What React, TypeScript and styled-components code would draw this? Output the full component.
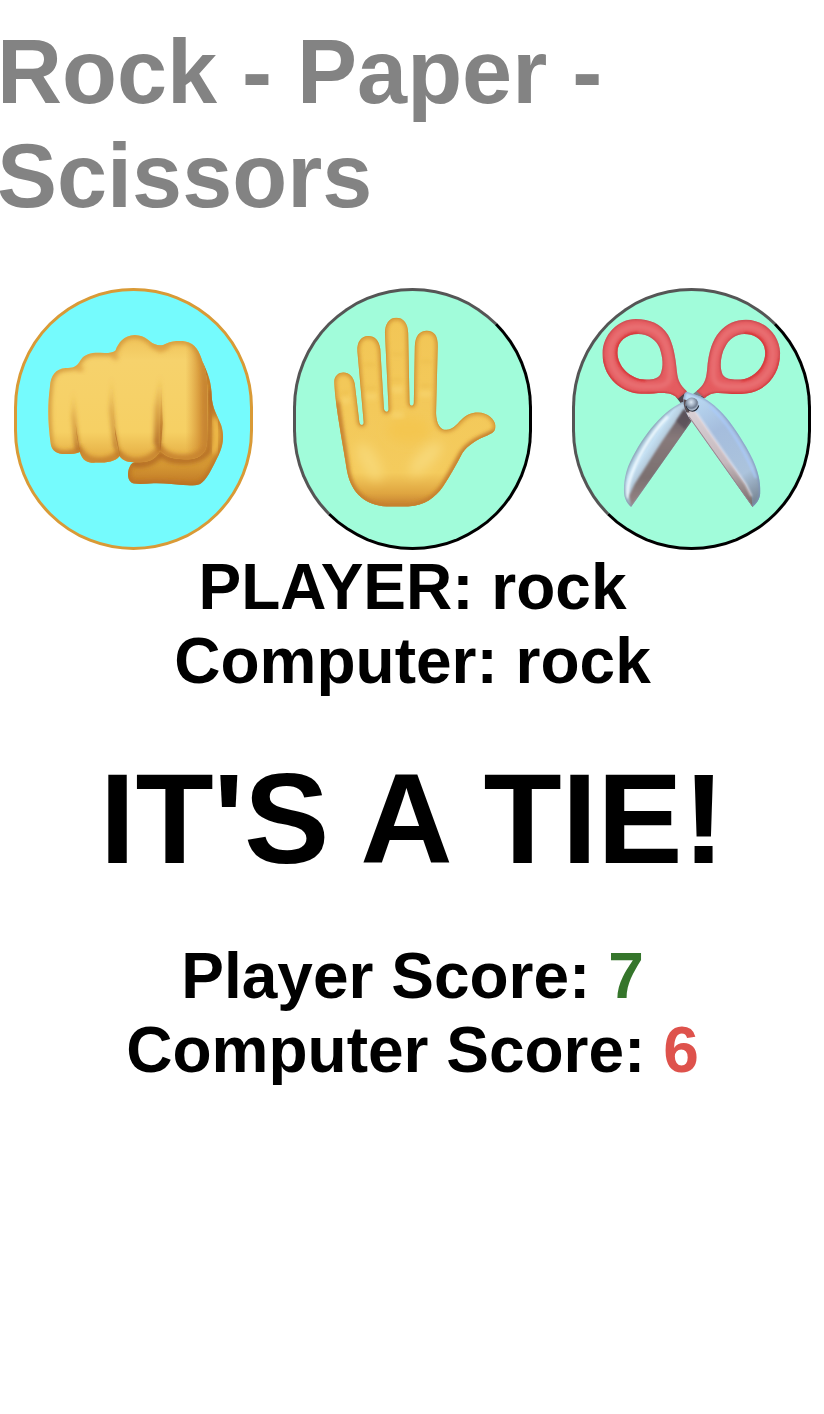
import React from "react";
import styled, { createGlobalStyle } from "styled-components";

const GlobalStyle = createGlobalStyle`
  *, *::before, *::after { box-sizing: border-box; }
  body {
    margin: 0;
    background: #ffffff;
    color: #000000;
    font-family: "Liberation Sans", Arial, sans-serif;
  }
`;

const Page = styled.main`
  display: flex;
  flex-direction: column;
  padding: 20px 0 0 1px;
`;

const Title = styled.h1`
  margin: 0 0 60px -4px;
  font-size: 90px;
  line-height: 104px;
  font-weight: 700;
  color: #838383;
`;

const Choices = styled.div`
  display: flex;
  gap: 40px;
  padding: 0 13px;
`;

const ChoiceButton = styled.button<{ $selected?: boolean }>`
  flex: 1;
  height: 262px;
  padding: 0;
  overflow: hidden;
  cursor: pointer;
  border: 3px solid;
  border-color: ${(p) => (p.$selected ? "#d99a36" : "#555555 #000000 #000000 #555555")};
  border-radius: 120px;
  background: ${(p) => (p.$selected ? "#75fbfd" : "#a1fcda")};
`;

const Art = styled.svg`
  display: block;
  width: 100%;
  height: 100%;
`;

const Results = styled.section`
  display: flex;
  flex-direction: column;
  gap: 47px;
  text-align: center;
  font-weight: 700;
`;

const Lines = styled.div`
  font-size: 64px;
  line-height: 74px;
`;

const Line = styled.p`
  margin: 0;
`;

const Verdict = styled.h2`
  margin: 0;
  font-size: 128px;
  line-height: 147px;
`;

const Score = styled.span<{ $tone: "win" | "lose" }>`
  color: ${(p) => (p.$tone === "win" ? "#35752b" : "#de524c")};
`;

const FIST =
  "M148 320C150 288 165 267 195 265C215 265 228 262 237 246C247 228 262 220 285 219C310 219 335 222 345 212C353 190 370 167 403 166C437 167 447 188 462 193C475 198 485 198 498 191C515 183 540 183 555 185C585 190 597 215 606 245C618 275 621 300 621 350L620 485C618 518 600 534 575 537C540 540 498 538 479 512C470 530 455 545 430 546C405 547 372 551 357 528C345 545 320 548 290 548C262 550 247 545 238 516C225 522 205 523 185 522C163 520 152 508 150 490C142 430 140 380 148 320Z";
const THUMB =
  "M606 245C625 285 633 310 634 350C636 385 650 405 662 435C672 465 670 495 655 525C640 555 625 590 605 608C595 618 580 617 560 616C525 614 490 609 460 610C440 611 420 614 400 611C378 605 380 575 388 560C392 550 400 546 410 545L480 500L590 400Z";

const FistArt = () => (
  <Art viewBox="49 34 700 767" preserveAspectRatio="none" aria-hidden="true">
    <defs>
      <clipPath id="fistClip"><path d={FIST} /></clipPath>
      <clipPath id="thumbClip"><path d={THUMB} /></clipPath>
      <linearGradient id="fistFill" x1="0" y1="0" x2="0" y2="1">
        <stop offset="0" stopColor="#efc258" />
        <stop offset=".2" stopColor="#f6d26c" />
        <stop offset=".76" stopColor="#f6d064" />
        <stop offset="1" stopColor="#e2a83e" />
      </linearGradient>
      <linearGradient id="thumbFill" x1="0" y1="0" x2="0" y2="1">
        <stop offset="0" stopColor="#cd8b2e" />
        <stop offset=".55" stopColor="#e9b344" />
        <stop offset=".85" stopColor="#d39532" />
        <stop offset="1" stopColor="#c07826" />
      </linearGradient>
      <linearGradient id="groove" x1="0" y1="0" x2="0" y2="1">
        <stop offset="0" stopColor="#cf8c31" stopOpacity="0" />
        <stop offset=".45" stopColor="#c37d2b" stopOpacity=".5" />
        <stop offset="1" stopColor="#a45a1c" stopOpacity=".9" />
      </linearGradient>
      <linearGradient id="fistSide" x1="555" x2="621" y1="0" y2="0" gradientUnits="userSpaceOnUse">
        <stop offset="0" stopColor="#d9993a" stopOpacity="0" />
        <stop offset=".6" stopColor="#d18d32" stopOpacity=".75" />
        <stop offset="1" stopColor="#ba7028" />
      </linearGradient>
      <filter id="fistSoft" x="-20%" y="-20%" width="140%" height="140%"><feGaussianBlur stdDeviation="8" /></filter>
      <filter id="grooveSoft" x="-100%" y="-10%" width="300%" height="120%"><feGaussianBlur stdDeviation="6" /></filter>
      <filter id="grooveLine" x="-100%" y="-10%" width="300%" height="120%"><feGaussianBlur stdDeviation="2" /></filter>
    </defs>
    <path d={THUMB} fill="url(#thumbFill)" />
    <g clipPath="url(#thumbClip)">
      <path d={THUMB} fill="none" stroke="#b86f24" strokeWidth="14" filter="url(#fistSoft)" />
      <path d="M398 552C430 560 465 545 480 522C510 550 590 552 624 515L632 330" fill="none" stroke="#b06821" strokeWidth="16" filter="url(#fistSoft)" />
      <path d="M641 415C655 450 652 490 638 520" fill="none" stroke="#f1bd4c" strokeWidth="14" filter="url(#fistSoft)" />
    </g>
    <path d={FIST} fill="url(#fistFill)" />
    <g clipPath="url(#fistClip)">
      <path d="M555 180H625V540H555Z" fill="url(#fistSide)" />
      <path d={FIST} fill="none" stroke="#cd8f36" strokeWidth="14" filter="url(#fistSoft)" />
      <path d="M148 510C180 532 215 524 236 508C260 552 320 553 355 520C390 558 445 550 479 505C510 548 590 542 622 500" fill="none" stroke="#c6812e" strokeWidth="16" filter="url(#fistSoft)" />
      <path d="M333 220L350 238M450 192L480 210L505 198M225 262L247 270" fill="none" stroke="#db9e40" strokeWidth="13" filter="url(#fistSoft)" />
      <path d="M218 325L213 410L223 500L238 519L229 440Z" fill="url(#groove)" filter="url(#grooveSoft)" />
      <path d="M333 285L326 390L340 500L357 530L345 450Z" fill="url(#groove)" filter="url(#grooveSoft)" />
      <path d="M480 280L462 380L460 490L479 515L486 440Z" fill="url(#groove)" filter="url(#grooveSoft)" />
      <path d="M218 350L225 430L238 519L228 465Z" fill="url(#groove)" filter="url(#grooveLine)" />
      <path d="M333 310L341 430L359 532L344 465Z" fill="url(#groove)" filter="url(#grooveLine)" />
      <path d="M482 310L487 430L480 515L479 440Z" fill="url(#groove)" filter="url(#grooveLine)" />
    </g>
  </Art>
);

const PALM =
  "M162 305C163 288 175 278 190 278C207 278 220 290 224 312L238 428C240 438 251 438 251 428L232 215C230 185 245 169 264 169C285 169 297 182 301 208L312 387C314 399 325 399 326 388L315 160C315 132 328 114 349 114C372 114 384 132 385 160L389 370C391 380 401 380 402 370L405 200C406 168 420 153 441 153C463 153 475 168 474 200L469 400C470 430 480 450 500 450C520 449 530 435 545 420C560 405 575 398 595 398C625 398 646 418 648 438C648 455 640 460 625 466C590 480 565 495 548 520C530 555 510 590 490 620C465 655 435 676 385 680L320 680C260 675 215 645 201 575C190 500 165 380 162 305Z";

const PalmArt = () => (
  <Art viewBox="47 34 702 767" preserveAspectRatio="none" aria-hidden="true">
    <defs>
      <clipPath id="palmClip"><path d={PALM} /></clipPath>
      <linearGradient id="palmFill" x1="0" y1="0" x2="0" y2="1">
        <stop offset="0" stopColor="#f2c656" />
        <stop offset=".82" stopColor="#f4cb5d" />
        <stop offset=".93" stopColor="#dfa540" />
        <stop offset="1" stopColor="#c47e2f" />
      </linearGradient>
      <filter id="palmSoft" x="-20%" y="-20%" width="140%" height="140%"><feGaussianBlur stdDeviation="6" /></filter>
      <filter id="palmGlow" x="-50%" y="-50%" width="200%" height="200%"><feGaussianBlur stdDeviation="16" /></filter>
    </defs>
    <path d={PALM} fill="url(#palmFill)" />
    <g clipPath="url(#palmClip)">
      <ellipse cx="385" cy="450" rx="65" ry="38" fill="#f4c64f" filter="url(#palmGlow)" />
      <ellipse cx="268" cy="545" rx="27" ry="62" transform="rotate(-30 268 545)" fill="#f7d775" filter="url(#palmGlow)" />
      <ellipse cx="438" cy="535" rx="25" ry="65" transform="rotate(45 438 535)" fill="#f7d878" filter="url(#palmGlow)" />
      <g fill="none" stroke="#f7d46d" strokeOpacity=".7" strokeWidth="20" filter="url(#palmSoft)">
        <path d="M184 365L209 359M253 350H291M332 330H370M418 342H456M335 405H372" />
      </g>
      <g fill="none" stroke="#eaba4a" strokeOpacity=".7" strokeWidth="7" filter="url(#palmSoft)">
        <path d="M180 342L207 336M250 255H286M255 325H291M332 223H369M332 300H370M420 246H458M419 318H456" />
      </g>
      <path d={PALM} fill="none" stroke="#cc892f" strokeWidth="11" filter="url(#palmSoft)" />
      <path d="M170 365L201 575C215 645 260 676 320 683H385C435 676 465 655 490 620L548 520C565 495 590 480 648 457" fill="none" stroke="#c27b2e" strokeWidth="13" filter="url(#palmSoft)" />
      <path d={PALM} fill="none" stroke="#c98a2b" strokeOpacity=".45" strokeWidth="4" />
    </g>
  </Art>
);

const LEFT_HANDLE =
  "M228 118C175 118 128 165 128 222C128 285 175 335 235 341C265 344 295 338 320 340C340 342 350 350 355 357L382 334C360 315 355 300 352 275C348 230 340 190 325 165C305 133 270 118 228 118ZM235 163C265 163 290 180 300 205C310 235 312 260 303 282C297 298 275 300 255 299C215 298 173 262 173 218C173 185 200 163 235 163Z";
const RIGHT_HANDLE =
  "M560 120C615 120 662 165 663 220C663 285 620 335 560 341C520 346 490 337 465 340C450 342 440 350 436 355L411 334C435 315 440 300 443 270C447 215 460 180 480 157C500 132 530 120 560 120ZM555 163C590 163 618 185 618 220C618 262 580 298 545 299C525 300 500 300 490 285C480 265 483 225 498 200C510 178 530 163 555 163Z";
const LEFT_BLADE = "M366 368C300 400 240 480 205 560C190 600 190 640 196 655C200 668 208 676 214 681L397 423L375 365Z";
const RIGHT_BLADE = "M378 334L412 346C470 365 520 430 560 500C595 560 605 600 603 640C602 660 590 672 580 681L388 412C372 385 366 358 378 334Z";

const ScissorsArt = () => (
  <Art viewBox="45 34 702 767" preserveAspectRatio="none" aria-hidden="true">
    <defs>
      <clipPath id="leftHandleClip"><path d={LEFT_HANDLE} clipRule="evenodd" /></clipPath>
      <clipPath id="rightHandleClip"><path d={RIGHT_HANDLE} clipRule="evenodd" /></clipPath>
      <clipPath id="leftBladeClip"><path d={LEFT_BLADE} /></clipPath>
      <clipPath id="rightBladeClip"><path d={RIGHT_BLADE} /></clipPath>
      <linearGradient id="leftBladeFill" x1="250" y1="470" x2="310" y2="510" gradientUnits="userSpaceOnUse">
        <stop offset="0" stopColor="#a3bed0" />
        <stop offset=".45" stopColor="#c4e0f3" />
        <stop offset="1" stopColor="#a9bac9" />
      </linearGradient>
      <linearGradient id="rightBladeFill" x1="400" y1="340" x2="590" y2="670" gradientUnits="userSpaceOnUse">
        <stop offset="0" stopColor="#bcdcf5" />
        <stop offset=".35" stopColor="#a5bddd" />
        <stop offset=".75" stopColor="#abc3dc" />
        <stop offset="1" stopColor="#75828f" />
      </linearGradient>
      <linearGradient id="lightBevel" x1="0" y1="0" x2="0" y2="1">
        <stop offset="0" stopColor="#ded7dc" />
        <stop offset=".6" stopColor="#c5b8bd" />
        <stop offset="1" stopColor="#756966" />
      </linearGradient>
      <linearGradient id="darkBevel" x1="0" y1="0" x2="0" y2="1">
        <stop offset="0" stopColor="#655b62" />
        <stop offset=".3" stopColor="#87797a" />
        <stop offset=".7" stopColor="#7b7070" />
        <stop offset="1" stopColor="#998687" />
      </linearGradient>
      <radialGradient id="screw" cx=".45" cy=".35" r=".75">
        <stop offset="0" stopColor="#dce8f3" />
        <stop offset=".3" stopColor="#aab8c9" />
        <stop offset=".6" stopColor="#707d90" />
        <stop offset=".8" stopColor="#b4c2d3" />
        <stop offset="1" stopColor="#4b5362" />
      </radialGradient>
      <filter id="handleSoft" x="-20%" y="-20%" width="140%" height="140%"><feGaussianBlur stdDeviation="7" /></filter>
      <filter id="bladeSoft" x="-20%" y="-20%" width="140%" height="140%"><feGaussianBlur stdDeviation="3" /></filter>
    </defs>
    <path d="M350 352L378 332L395 348L373 382Z" fill="#4e434c" />
    <path d="M440 350L414 331L398 345L425 368Z" fill="#7a7e88" />
    <path d="M425 366L439 348L433 343L417 359Z" fill="#4c4850" />
    <path d={LEFT_BLADE} fill="url(#leftBladeFill)" />
    <g clipPath="url(#leftBladeClip)">
      <path d={LEFT_BLADE} fill="none" stroke="#7993a6" strokeWidth="5" filter="url(#bladeSoft)" />
      <path d="M325 410C270 465 225 545 209 604C203 625 203 640 206 654" fill="none" stroke="#f0faff" strokeWidth="8" filter="url(#bladeSoft)" />
      <path d="M373 390L305 488L225 612L208 648L214 681L405 425Z" fill="url(#darkBevel)" filter="url(#bladeSoft)" />
      <path d="M375 385L400 410L377 449L350 424Z" fill="#514951" fillOpacity=".65" filter="url(#bladeSoft)" />
    </g>
    <path d={RIGHT_BLADE} fill="url(#rightBladeFill)" />
    <g clipPath="url(#rightBladeClip)">
      <path d={RIGHT_BLADE} fill="none" stroke="#7c96bf" strokeWidth="6" filter="url(#bladeSoft)" />
      <path d="M450 379C500 424 549 497 590 594" fill="none" stroke="#a9cbff" strokeWidth="5" filter="url(#bladeSoft)" />
      <path d="M370 350L391 389L407 395L558 613L577 649L580 681L382 407Z" fill="url(#lightBevel)" />
      <path d="M410 398L560 614L577 649" fill="none" stroke="#f0e8ed" strokeWidth="4" filter="url(#bladeSoft)" />
      <path d="M388 411L580 681" fill="none" stroke="#95848b" strokeWidth="4" />
      <path d="M362 355L382 361L390 398L378 398Z" fill="#5c5054" />
    </g>
    <circle cx="397" cy="373" r="20" fill="url(#screw)" />
    <path d="M379 378C383 389 390 394 399 394C408 393 415 387 418 377" fill="none" stroke="#242b37" strokeWidth="3" />
    <path d={LEFT_HANDLE} fill="#e45c60" fillRule="evenodd" />
    <g clipPath="url(#leftHandleClip)">
      <path d="M231 141C183 141 151 177 151 221C151 279 195 318 251 320C293 321 323 321 329 300C335 265 330 214 311 179C293 151 263 141 231 141Z" fill="none" stroke="#ea7477" strokeWidth="13" filter="url(#handleSoft)" />
      <path d={LEFT_HANDLE} fill="none" stroke="#b9444a" strokeWidth="5" filter="url(#bladeSoft)" />
      <path d="M235 160C200 160 170 185 170 218C170 262 215 300 257 302M128 235C133 290 181 340 237 341C275 344 320 336 350 353" fill="none" stroke="#dc2c2c" strokeWidth="5" filter="url(#bladeSoft)" />
    </g>
    <path d={RIGHT_HANDLE} fill="#e45b5f" fillRule="evenodd" />
    <g clipPath="url(#rightHandleClip)">
      <path d="M562 141C608 141 641 177 641 222C641 279 600 318 549 320C499 321 468 321 463 297C460 258 464 211 487 179C505 151 532 141 562 141Z" fill="none" stroke="#ea7477" strokeWidth="13" filter="url(#handleSoft)" />
      <path d={RIGHT_HANDLE} fill="none" stroke="#b9444a" strokeWidth="5" filter="url(#bladeSoft)" />
      <path d="M555 160C592 160 621 186 621 220C620 265 580 301 546 302M663 235C658 290 620 336 560 341C520 346 478 335 438 352" fill="none" stroke="#dc2c2c" strokeWidth="5" filter="url(#bladeSoft)" />
    </g>
  </Art>
);

const choices = [
  { name: "rock", Picture: FistArt },
  { name: "paper", Picture: PalmArt },
  { name: "scissors", Picture: ScissorsArt },
];

export default function App() {
  const player = "rock";
  const computer = "rock";

  return (
    <>
      <GlobalStyle />
      <Page>
        <Title>Rock - Paper - Scissors</Title>
        <Choices>
          {choices.map(({ name, Picture }) => (
            <ChoiceButton key={name} type="button" aria-label={name} aria-pressed={name === player} $selected={name === player}>
              <Picture />
            </ChoiceButton>
          ))}
        </Choices>
        <Results>
          <Lines>
            <Line>PLAYER: {player}</Line>
            <Line>Computer: {computer}</Line>
          </Lines>
          <Verdict>IT'S A TIE!</Verdict>
          <Lines>
            <Line>Player Score: <Score $tone="win">7</Score></Line>
            <Line>Computer Score: <Score $tone="lose">6</Score></Line>
          </Lines>
        </Results>
      </Page>
    </>
  );
}
